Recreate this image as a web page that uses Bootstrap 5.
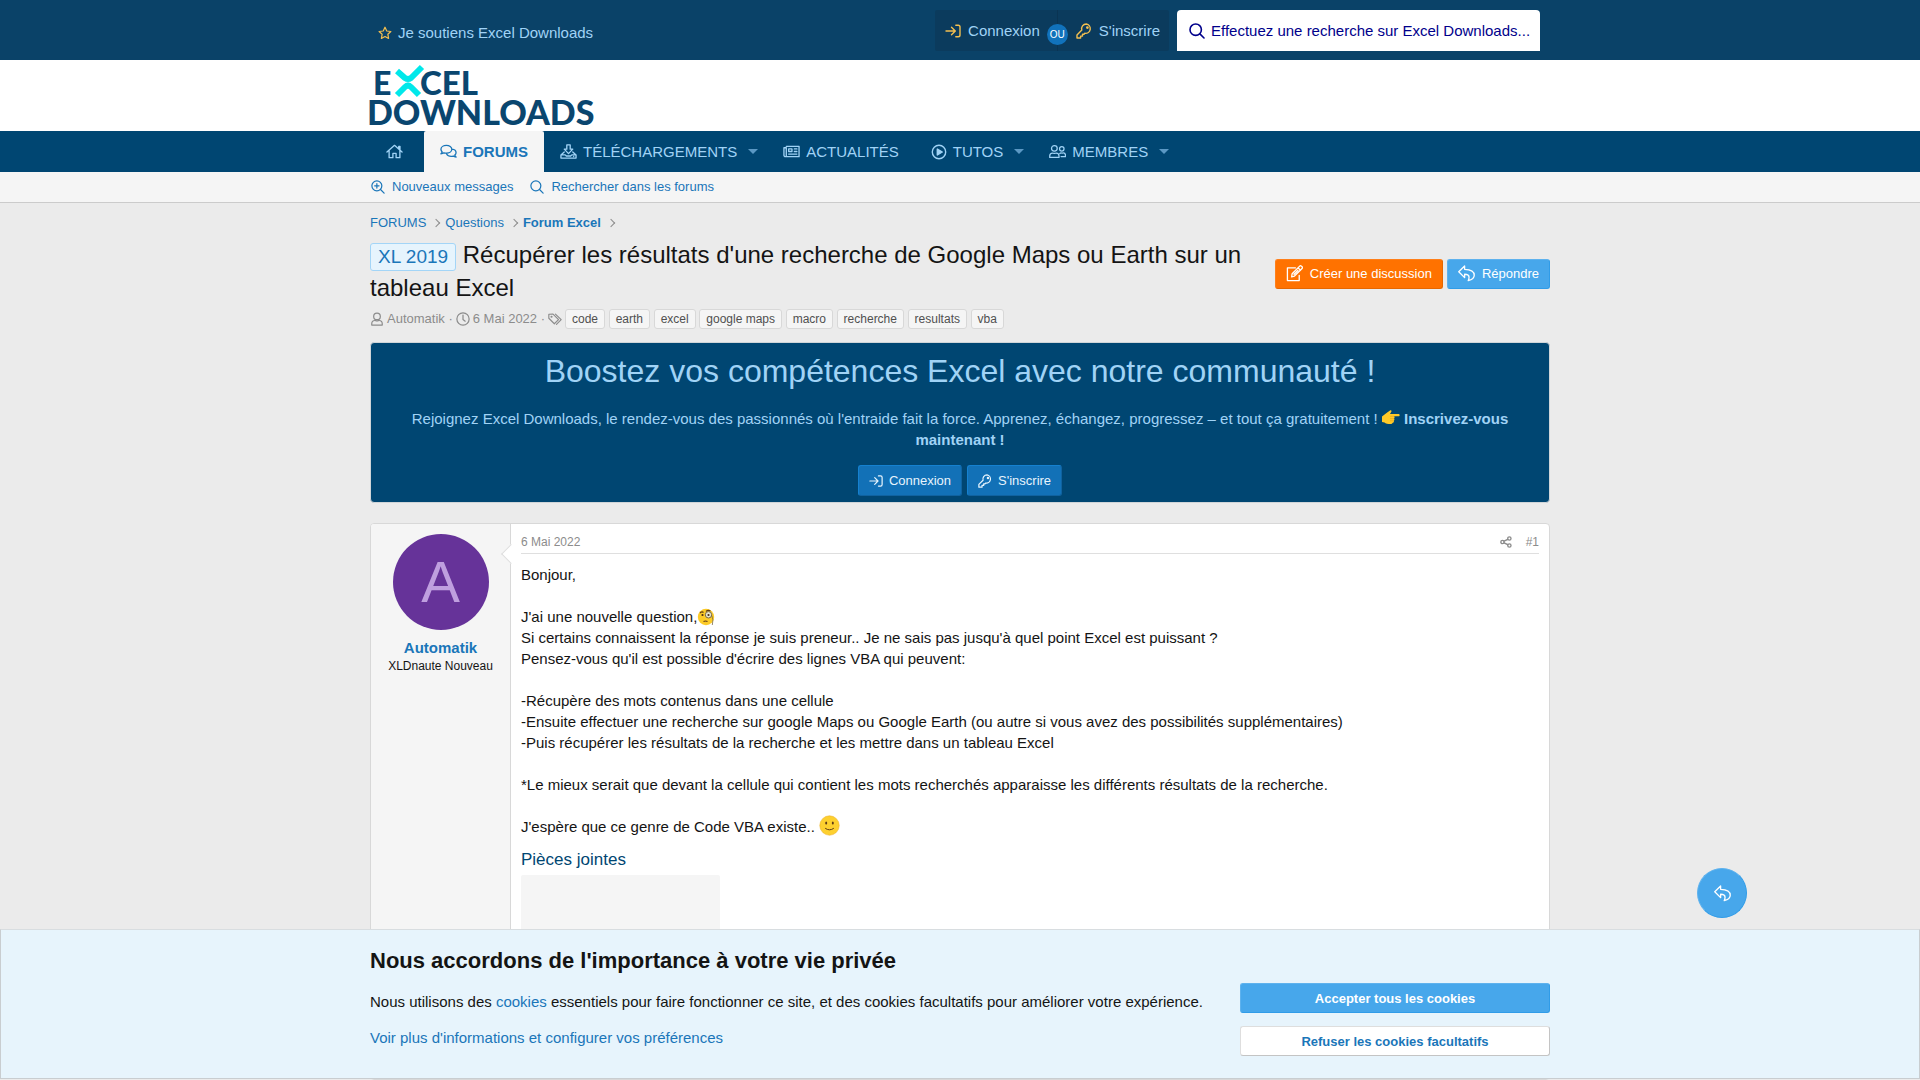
<!DOCTYPE html>
<html lang="fr">
<head>
<meta charset="utf-8">
<meta name="viewport" content="width=device-width, initial-scale=1">
<title>XL 2019 - Récupérer les résultats d'une recherche | Excel Downloads</title>
<link rel="stylesheet" href="https://cdn.jsdelivr.net/npm/bootstrap@5.3.0/dist/css/bootstrap.min.css">
<style>
:root{--xd-link:#1a76b9;--xd-navy:#004672;--xd-pale:#a0d3f6;--xd-sky:#47a7eb;--xd-line:#d8d8d8}
body{font-family:"Liberation Sans",Arial,sans-serif;font-size:15px;line-height:21px;color:#141414;background:#ebebeb}
a{color:var(--xd-link);text-decoration:none}
a:hover{text-decoration:underline}
.xd-wrap{width:100%;max-width:1200px;margin:0 auto;padding:0 10px}
.ico{width:16px;height:16px;flex:none;fill:none;stroke:currentColor;stroke-width:1.4;stroke-linecap:round;stroke-linejoin:round}
.ico-lg{width:17px;height:17px}
.ico-sm{width:14px;height:14px}
.ico-xs{width:12px;height:12px}

.topbar{background:#0a4268}
.topbar .xd-wrap{min-height:60px}
.topbar a{color:var(--xd-pale)}
.topbar .ico{stroke:#f3bf50}
.support{padding:5px 0 0 8px;gap:6px}
.top-tools{padding-top:10px}
.account{background:#0b3b5d;height:41px;border-radius:2px}
.account a{height:41px;gap:7px}
.account .login{padding:0 17px 0 10px;border-right:1px solid #0a3453}
.account .signup{padding:0 9px 0 18px}
.or-badge{right:-11px;top:14px;width:21px;height:21px;line-height:21px;font-size:10px;color:#fff;background:#1172bb;border-radius:50%;text-align:center;z-index:2}
.searchbox{background:#fff;height:41px;width:363px;padding:0 0 0 12px;gap:6px;border-radius:4px 4px 0 0;color:#00008b;margin-right:10px}
.searchbox .ico{stroke:#00008b;stroke-width:1.6}
.searchbox input{border:0;outline:0;padding:0;background:none;color:#00008b;min-width:0}
.searchbox input::placeholder{color:#00008b;opacity:1}

.brandbar{background:#fff;height:71px}
.brandbar svg{display:block;margin-left:-4px}
.mainnav{background:var(--xd-navy)}
.tab{height:41px;padding:0 16px;gap:6px;color:var(--xd-pale)}
.tab.has-menu{padding-right:3px}
.tab.home{margin-right:5px}
.tab.current{background:#f5f5f5;color:var(--xd-link);font-weight:700;border-radius:2px 2px 0 0}
.menu-btn{border:0;background:none;height:41px;padding:0 9px 0 8px}
.menu-btn::after{content:"";display:block;border:5px solid transparent;border-bottom:0;border-top-color:#5b98c4}
.subnav{background:#f5f5f5;border-bottom:1px solid #cbcbcb;font-size:13px}
.subnav a{height:30px;gap:7px;padding:0 0 1px 1px;margin-right:16px}

.crumbs{padding:10px 0 4px;font-size:13px;line-height:20px}
.crumbs li{display:flex;align-items:center}
.crumbs li::after{content:"";width:6px;height:6px;border:solid #8c8c8c;border-width:1px 1px 0 0;transform:rotate(45deg);margin:0 6px 0 7px}
.thread-title{font-size:24px;line-height:33px;font-weight:400;margin:0}
.prefix{display:inline-block;font-size:19px;line-height:26px;padding:0 7px;color:var(--xd-link);background:#e6f4fd;border:1px solid #a3d5f7;border-radius:3px}
.thread-head{column-gap:32px;padding-top:1px}
.btn-pair{gap:5px}
.thread-head .btn-pair{padding-top:5px;gap:4px}
.xbtn{display:inline-flex;align-items:center;justify-content:center;height:30px;padding:0 10px;gap:6px;font-size:13px;border:1px solid;border-radius:3px}
.thread-head .xbtn{gap:7px}
.xbtn-cta{background:#ff7200;border-color:#ff7f1a #e66700 #e66700 #ff7f1a;color:#fff}
.xbtn-sky{background:var(--xd-sky);border-color:#5eb2ee #309ce8 #309ce8 #5eb2ee;color:#fff}
.xbtn-blue{background:#1271b7;border-color:#1581d0 #10629f #10629f #1581d0;color:#e7f4fd;height:31px}
.xbtn-plain{background:#fff;border-color:#dedede #c4c4c4 #c4c4c4 #dedede;color:var(--xd-link)}
.meta{font-size:13px;line-height:20px;color:#8c8c8c;padding:5px 0 13px;gap:3px}
.tag{display:inline-block;font-size:12px;line-height:18px;padding:0 6px;color:#505050;background:#f5f5f5;border:1px solid var(--xd-line);border-radius:3px}

.promo{background:var(--xd-navy);color:var(--xd-pale);border:1px solid #d0d5d8;border-radius:4px;padding:6px 10px;text-align:center}
.promo h2{font-size:32px;line-height:45px;font-weight:400;margin:0 0 14px}
.promo p{margin:0 0 15px;padding:0 10px}
.promo p svg{vertical-align:-1px}
.post{background:#fff;border:1px solid var(--xd-line);border-radius:4px;margin-top:20px}
.author{width:140px;padding:10px;background:#f5f5f5;border-right:1px solid var(--xd-line);border-radius:3px 0 0 0;text-align:center}
.author::after{content:"";position:absolute;top:23px;right:-8px;width:14px;height:14px;background:#fff;border:solid #dedede;border-width:0 0 1px 1px;transform:rotate(45deg)}
.avatar{width:96px;height:96px;border-radius:50%;background:#663399;color:#bf9fdf;font-size:58px;line-height:96px}
.author-name{display:block;font-weight:700;margin-top:7px}
.author-title{font-size:12px;line-height:16px}
.post-main{padding:8px 10px 20px}
.post-bar{font-size:12px;line-height:20px;border-bottom:1px solid #dfdfdf;padding-bottom:1px;column-gap:14px}
.post-bar, .post-bar a{color:#8c8c8c}
.post-bar .ico{stroke-width:1.8}
.post-text{margin:10px 0 0}
.post-text svg{vertical-align:-4px;display:inline-block;margin-top:-3px}
.attach-title{font-size:17px;line-height:24px;font-weight:400;color:var(--xd-navy);margin:11px 0 3px}
.attach-box{width:199px;height:120px;background:#f5f5f5;border-radius:2px}

.reply-fab{position:fixed;right:173px;bottom:162px;width:50px;height:50px;border-radius:50%;z-index:5;padding:0}
.cookie{position:fixed;left:0;right:0;bottom:1px;z-index:4;background:#e7f4fc;border:1px solid #c9cdd0;border-top-color:#d8dde0;padding:14px 0 22px}
.cookie h2{font-size:22px;line-height:34px;font-weight:700;margin:0 0 5px}
.cookie p{margin:0 0 15px}
.cookie-actions{width:310px;gap:13px}
.cookie .xbtn{font-weight:700}
</style>
<script src="https://cdn.jsdelivr.net/npm/bootstrap@5.3.0/dist/js/bootstrap.bundle.min.js"></script>
</head>
<body class="d-flex flex-column min-vh-100">

<svg width="0" height="0" class="position-absolute" aria-hidden="true">
  <symbol id="i-star" viewBox="0 0 16 16"><path d="M8 1.400 10 5.700l4.700.6-3.400 3.200.8 4.700L8 12l-4.100 2.200.8-4.700L1.300 6.300 6 5.700z"/></symbol>
  <symbol id="i-login" viewBox="0 0 16 16"><path d="M1 8h9M6.500 4.200 10.300 8l-3.800 3.800M10.800 2.200h2.400a1.800 1.800 0 0 1 1.800 1.800v8a1.800 1.800 0 0 1-1.800 1.800h-2.400"/></symbol>
  <symbol id="i-key" viewBox="0 0 16 16"><path d="M10.300 1a4.700 4.700 0 0 0-4.500 6.100L1 11.900V15h3.600v-1.900h1.900v-1.900H8l.8-.9A4.700 4.700 0 1 0 10.300 1z"/><circle cx="11.400" cy="4.600" r=".7"/></symbol>
  <symbol id="i-search" viewBox="0 0 16 16"><circle cx="6.700" cy="6.700" r="5.700"/><path d="m10.900 10.900 4.100 4.100"/></symbol>
  <symbol id="i-searchplus" viewBox="0 0 16 16"><circle cx="6.700" cy="6.700" r="5.700"/><path d="m10.900 10.900 4.100 4.100M4.200 6.700h5M6.700 4.200v5"/></symbol>
  <symbol id="i-home" viewBox="0 0 18 16"><path d="M1 8.500 9 1.500l8 7M13.500 5V2.500h1.300v4M3.300 7v7.500h4V10h3.400v4.500h4V7"/></symbol>
  <symbol id="i-chat" viewBox="0 0 18 16"><path d="M6.800 1.500C3.600 1.500 1 3.300 1 5.700c0 1.100.5 2 1.300 2.700-.2.800-.7 1.500-1.300 2 1.200 0 2.300-.4 3.100-1 .8.300 1.700.4 2.700.4 3.200 0 5.700-1.800 5.700-4.100S10 1.500 6.800 1.500zM12.600 5.500c2.500.2 4.400 1.800 4.400 3.700 0 1-.5 1.900-1.300 2.600.2.800.7 1.500 1.300 2-1.200 0-2.300-.4-3.100-1-.7.200-1.400.3-2.100.3-2.100 0-4-.9-4.800-2.500"/></symbol>
  <symbol id="i-download" viewBox="0 0 18 16"><path d="M7.200 1h3.600v4.500h2.700L9 10.300 4.500 5.500h2.700zM4.500 8.500 1 11.600V15h16v-3.400l-3.500-3.100M1 11.600h4.500l1.200 1.200h4.600l1.200-1.200H17M14.500 13.200v.1"/></symbol>
  <symbol id="i-news" viewBox="0 0 18 16"><path d="M3.500 2.500H17v11H2.500A1.500 1.500 0 0 1 1 12V4h2.500v8.500M6 5.300h3.500V8H6zM12 5.300h2.700M12 8h2.700M6 10.700h8.700"/></symbol>
  <symbol id="i-play" viewBox="0 0 16 16"><circle cx="8" cy="8" r="6.700"/><path fill="currentColor" d="M6.300 5v6l5-3z"/></symbol>
  <symbol id="i-users" viewBox="0 0 19 16"><circle cx="6" cy="4.500" r="3.200"/><path d="M.8 14.700v-1.600c0-2 1.600-3.300 3.200-3.300.7 0 1 .4 2 .4s1.300-.4 2-.4c1.600 0 3.200 1.300 3.200 3.300v1.600z"/><circle cx="14.300" cy="5" r="2.500"/><path d="M12 10.300c.4-.5 1-.7 1.500-.7.500 0 .5.300 1.200.3s.8-.3 1.300-.3c1.400 0 2.400 1 2.400 2.600v1.500h-4.900"/></symbol>
  <symbol id="i-user" viewBox="0 0 16 16"><circle cx="8" cy="5" r="3.800"/><path d="M2 14.900v-1.500c0-2.400 1.900-3.700 3.600-3.700.8 0 1.200.5 2.400.5s1.600-.5 2.400-.5c1.700 0 3.600 1.300 3.600 3.700v1.500z"/></symbol>
  <symbol id="i-clock" viewBox="0 0 16 16"><circle cx="8" cy="8" r="7"/><path d="M8 3.500v5l2.500 2"/></symbol>
  <symbol id="i-tags" viewBox="0 0 17 16"><path d="M1 2.200v4.900l6.700 6.700 5.100-5.100L6.100 2zM9 2l7 6.800-5.700 5.800"/><circle cx="4.300" cy="5.300" r=".6"/></symbol>
  <symbol id="i-edit" viewBox="0 0 18 18"><path d="M10 3H1.500v13.500H14V11M6 12.500l.5-3.300 8-8a1.300 1.300 0 0 1 1.800 0l.7.700a1.300 1.300 0 0 1 0 1.800l-8 8zM12.700 3l2.600 2.500M8.500 9.800l4-4"/></symbol>
  <symbol id="i-reply" viewBox="0 0 18 18"><path d="M7 1 .8 7.200 7 13.400V9.800c2.600 0 4.700.5 4.700 3.300 0 1.500-.4 2.500-.9 3.500 3.800-.9 6.400-2.600 6.400-5.700C17.200 6.600 13.500 4.700 7 4.600z"/></symbol>
  <symbol id="i-share" viewBox="0 0 16 16"><circle cx="3.300" cy="8" r="2.200"/><circle cx="12.500" cy="3.300" r="2.200"/><circle cx="12.500" cy="12.700" r="2.200"/><path d="m5.500 6.900 4.800-2.500M5.500 9.100l4.800 2.500"/></symbol>
</svg>

<header>
  <div class="topbar">
    <div class="xd-wrap d-flex justify-content-between">
      <a href="#" class="support d-flex align-items-center"><svg class="ico ico-sm"><use href="#i-star"/></svg>Je soutiens Excel Downloads</a>
      <div class="top-tools d-flex gap-2 align-items-start">
        <div class="account d-flex">
          <a href="#" class="login d-flex align-items-center position-relative"><svg class="ico"><use href="#i-login"/></svg>Connexion<span class="or-badge position-absolute">OU</span></a>
          <a href="#" class="signup d-flex align-items-center"><svg class="ico"><use href="#i-key"/></svg>S'inscrire</a>
        </div>
        <label class="searchbox d-flex align-items-center"><svg class="ico" aria-hidden="true"><use href="#i-search"/></svg><input class="flex-grow-1" type="text" aria-label="Recherche" placeholder="Effectuez une recherche sur Excel Downloads..."></label>
      </div>
    </div>
  </div>
  <div class="brandbar">
    <div class="xd-wrap">
      <a href="#" aria-label="Excel Downloads">
        <svg width="250" height="71" viewBox="0 0 250 71" font-family="Lato, sans-serif" font-weight="900" font-size="34" fill="#0a466f">
          <text x="7" y="35" font-size="32">E</text><text x="54" y="35" font-size="33">CEL</text><text x="1" y="65">DOWNLOADS</text>
          <g fill="none" stroke="#00e8ea" stroke-width="6"><path d="m31 11 8 7q3 2 6 0L56 7"/><path d="m31 35 8-8q3-3 6 0l8 8"/></g>
        </svg>
      </a>
    </div>
  </div>
  <nav class="mainnav" aria-label="Navigation principale">
    <ul class="xd-wrap d-flex list-unstyled mb-0">
      <li><a href="#" class="tab home d-flex align-items-center" aria-label="Accueil"><svg class="ico ico-lg"><use href="#i-home"/></svg></a></li>
      <li><a href="#" class="tab current d-flex align-items-center"><svg class="ico ico-lg"><use href="#i-chat"/></svg>FORUMS</a></li>
      <li class="d-flex"><a href="#" class="tab has-menu d-flex align-items-center"><svg class="ico ico-lg"><use href="#i-download"/></svg>TÉLÉCHARGEMENTS</a><button class="menu-btn" aria-label="Ouvrir Téléchargements"></button></li>
      <li><a href="#" class="tab d-flex align-items-center"><svg class="ico ico-lg"><use href="#i-news"/></svg>ACTUALITÉS</a></li>
      <li class="d-flex"><a href="#" class="tab has-menu d-flex align-items-center"><svg class="ico"><use href="#i-play"/></svg>TUTOS</a><button class="menu-btn" aria-label="Ouvrir Tutos"></button></li>
      <li class="d-flex"><a href="#" class="tab has-menu d-flex align-items-center"><svg class="ico ico-lg"><use href="#i-users"/></svg>MEMBRES</a><button class="menu-btn" aria-label="Ouvrir Membres"></button></li>
    </ul>
  </nav>
  <div class="subnav">
    <div class="xd-wrap d-flex">
      <a href="#" class="d-flex align-items-center"><svg class="ico ico-sm"><use href="#i-searchplus"/></svg>Nouveaux messages</a>
      <a href="#" class="d-flex align-items-center"><svg class="ico ico-sm"><use href="#i-search"/></svg>Rechercher dans les forums</a>
    </div>
  </div>
</header>

<main class="xd-wrap flex-grow-1 d-flex flex-column">
  <ol class="crumbs list-unstyled d-flex mb-0">
    <li><a href="#">FORUMS</a></li><li><a href="#">Questions</a></li><li><a href="#" class="fw-bold">Forum Excel</a></li>
  </ol>
  <div class="thread-head d-flex align-items-center">
    <h1 class="thread-title flex-grow-1"><span class="prefix">XL 2019</span> Récupérer les résultats d'une recherche de Google Maps ou Earth sur un tableau Excel</h1>
    <div class="btn-pair d-flex flex-shrink-0">
      <a href="#" class="xbtn xbtn-cta"><svg class="ico ico-lg"><use href="#i-edit"/></svg>Créer une discussion</a>
      <a href="#" class="xbtn xbtn-sky"><svg class="ico ico-lg"><use href="#i-reply"/></svg>Répondre</a>
    </div>
  </div>
  <div class="meta d-flex align-items-center">
    <svg class="ico ico-sm"><use href="#i-user"/></svg><span>Automatik ·</span>
    <svg class="ico ico-sm"><use href="#i-clock"/></svg><span>6 Mai 2022 ·</span>
    <svg class="ico ico-sm"><use href="#i-tags"/></svg>
    <div>
      <a href="#" class="tag">code</a>
      <a href="#" class="tag">earth</a>
      <a href="#" class="tag">excel</a>
      <a href="#" class="tag">google maps</a>
      <a href="#" class="tag">macro</a>
      <a href="#" class="tag">recherche</a>
      <a href="#" class="tag">resultats</a>
      <a href="#" class="tag">vba</a>
    </div>
  </div>

  <section class="promo">
    <h2>Boostez vos compétences Excel avec notre communauté !</h2>
    <p>Rejoignez Excel Downloads, le rendez-vous des passionnés où l'entraide fait la force. Apprenez, échangez, progressez – et tout ça gratuitement ! <svg width="18" height="15" viewBox="0 0 18 15" aria-hidden="true"><path fill="#ffca28" d="M0 6.500 4.500 3 8 .5c1-.7 2 .3 1.300 1.200L8 4h8.500c1.500 0 1.500 2.300 0 2.300H12c.8.500.8 1.700 0 2.200.7.600.5 1.800-.3 2.200.5.900 0 1.900-1 2-.3.900-1.200 1.300-2.200 1.300-2.500 0-5-.5-6-1.500L0 12z"/><path d="M8 6.300h4M8 8.600h4M8 10.800h3.600" stroke="#e0a01c" stroke-width=".6"/></svg> <strong>Inscrivez-vous maintenant !</strong></p>
    <div class="btn-pair d-flex justify-content-center">
      <a href="#" class="xbtn xbtn-blue"><svg class="ico ico-sm"><use href="#i-login"/></svg>Connexion</a>
      <a href="#" class="xbtn xbtn-blue"><svg class="ico ico-sm"><use href="#i-key"/></svg>S'inscrire</a>
    </div>
  </section>

  <article class="post d-flex flex-grow-1">
    <aside class="author position-relative flex-shrink-0">
      <div class="avatar mx-auto">A</div>
      <a href="#" class="author-name">Automatik</a>
      <div class="author-title text-nowrap">XLDnaute Nouveau</div>
    </aside>
    <div class="post-main flex-grow-1">
      <div class="post-bar d-flex">
        <time class="me-auto">6 Mai 2022</time>
        <a href="#" class="d-flex align-items-center" aria-label="Partager"><svg class="ico ico-xs"><use href="#i-share"/></svg></a>
        <a href="#">#1</a>
      </div>
      <div class="post-text">
        Bonjour,<br><br>
        J'ai une nouvelle question,<svg width="18" height="18" viewBox="0 0 18 18" aria-hidden="true"><circle cx="9" cy="9" r="8.200" fill="#fccb28"/><path d="M3 5q2-2 3.500-.5M9 3.500q2-2 4.500-.5M6.500 13.500q2-1 4 0" fill="none" stroke="#5f3b16" stroke-width="1.100"/><circle cx="5.500" cy="7" r="1.100" fill="#4a2d14"/><circle cx="11.500" cy="6.800" r="3.200" fill="#e5e4cf" stroke="#7b6a45"/><circle cx="11.500" cy="7" r="1.100" fill="#4a2d14"/><path d="M14.800 7.500q2 4 .5 9.500" fill="none" stroke="#7b6a45" stroke-width=".8"/></svg><br>
        Si certains connaissent la réponse je suis preneur.. Je ne sais pas jusqu'à quel point Excel est puissant ?<br>
        Pensez-vous qu'il est possible d'écrire des lignes VBA qui peuvent:<br><br>
        -Récupère des mots contenus dans une cellule<br>
        -Ensuite effectuer une recherche sur google Maps ou Google Earth (ou autre si vous avez des possibilités supplémentaires)<br>
        -Puis récupérer les résultats de la recherche et les mettre dans un tableau Excel<br><br>
        *Le mieux serait que devant la cellule qui contient les mots recherchés apparaisse les différents résultats de la recherche.<br><br>
        J'espère que ce genre de Code VBA existe.. <svg width="21" height="21" viewBox="0 0 21 21" aria-hidden="true"><circle cx="10.500" cy="10.500" r="9.700" fill="#fdd02f" stroke="#eeb32b" stroke-width=".6"/><ellipse cx="7.200" cy="8" rx="1" ry="1.600" fill="#5f3b16"/><ellipse cx="13.800" cy="8" rx="1" ry="1.600" fill="#5f3b16"/><path d="M6.500 13.500q4 2.800 8 0" fill="none" stroke="#5f3b16" stroke-linecap="round"/></svg>
      </div>
      <h2 class="attach-title">Pièces jointes</h2>
      <div class="attach-box"></div>
    </div>
  </article>
</main>

<a href="#" class="reply-fab xbtn xbtn-sky" aria-label="Répondre"><svg class="ico ico-lg"><use href="#i-reply"/></svg></a>

<section class="cookie" aria-label="Cookies">
  <div class="xd-wrap">
    <h2>Nous accordons de l'importance à votre vie privée</h2>
    <div class="d-flex justify-content-between">
      <div class="pt-2">
        <p>Nous utilisons des <a href="#">cookies</a> essentiels pour faire fonctionner ce site, et des cookies facultatifs pour améliorer votre expérience.</p>
        <a href="#">Voir plus d'informations et configurer vos préférences</a>
      </div>
      <div class="cookie-actions d-flex flex-column flex-shrink-0">
        <button class="xbtn xbtn-sky">Accepter tous les cookies</button>
        <button class="xbtn xbtn-plain">Refuser les cookies facultatifs</button>
      </div>
    </div>
  </div>
</section>
</body>
</html>
